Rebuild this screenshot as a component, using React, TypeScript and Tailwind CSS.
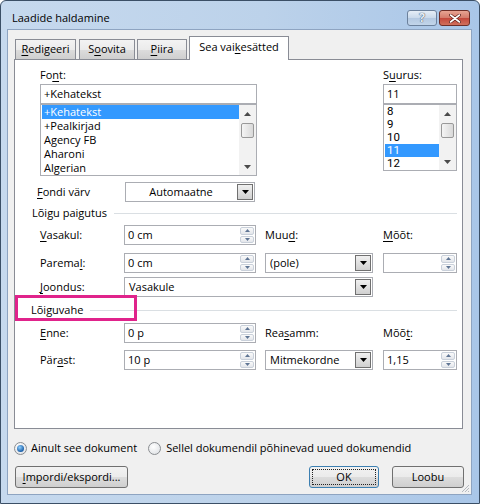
import React from "react";

function U({ children }: { children: React.ReactNode }) {
  return <span className="underline decoration-[1px] underline-offset-[2px]">{children}</span>;
}

function Up({ w = 7, h = 4, c = "#3f4a5a" }: { w?: number; h?: number; c?: string }) {
  return (
    <svg width={w} height={h} viewBox={`0 0 ${w} ${h}`}>
      <path d={`M0 ${h}L${w / 2} 0L${w} ${h}Z`} fill={c} />
    </svg>
  );
}

function Down({ w = 7, h = 4, c = "#3f4a5a" }: { w?: number; h?: number; c?: string }) {
  return (
    <svg width={w} height={h} viewBox={`0 0 ${w} ${h}`}>
      <path d={`M0 0L${w} 0L${w / 2} ${h}Z`} fill={c} />
    </svg>
  );
}

function SpinBox({ value, className }: { value: string; className: string }) {
  return (
    <div className={`flex h-[20px] border border-[#abadb3] bg-white ${className}`}>
      <div className="flex-1 pl-[3px] leading-[18px]">{value}</div>
      <div className="flex w-[16px] flex-col gap-px p-px">
        <div className="flex flex-1 items-center justify-center rounded-[2px] border border-[#c9d0da] bg-[linear-gradient(#fafafa,#e3e6eb)]">
          <Up w={5} h={3} c="#5f7594" />
        </div>
        <div className="flex flex-1 items-center justify-center rounded-[2px] border border-[#c9d0da] bg-[linear-gradient(#fafafa,#e3e6eb)]">
          <Down w={5} h={3} c="#5f7594" />
        </div>
      </div>
    </div>
  );
}

function DropDown({ value, className, center }: { value: string; className: string; center?: boolean }) {
  return (
    <div className={`flex h-[20px] border border-[#abadb3] bg-white ${className}`}>
      <div className={`flex-1 leading-[18px] ${center ? "text-center" : "pl-[4px]"}`}>{value}</div>
      <div className="m-px flex w-[16px] items-center justify-center border border-[#707070] bg-[linear-gradient(#f0f0f0,#d0d0d0)]">
        <Down c="#000" />
      </div>
    </div>
  );
}

function ScrollBar() {
  return (
    <div className="flex w-[17px] flex-col bg-[#f2f2f2]">
      <div className="flex h-[17px] items-center justify-center">
        <Up c="#4a4a4a" />
      </div>
      <div className="flex-1 px-[2px] pt-px">
        <div className="h-[15px] rounded-[2px] border border-[#999] bg-[linear-gradient(to_right,#f5f5f5,#d9d9d9)]" />
      </div>
      <div className="flex h-[17px] items-center justify-center">
        <Down c="#4a4a4a" />
      </div>
    </div>
  );
}

function ListBox({
  items,
  selected,
  row,
  className,
}: {
  items: string[];
  selected: number;
  row: string;
  className: string;
}) {
  return (
    <div className={`flex border border-[#abadb3] bg-white ${className}`}>
      <div className="flex-1 pl-px">
        {items.map((t, i) => (
          <div
            key={t}
            className={`${row} pl-[2px] ${i === selected ? "bg-[#3399ff] text-white" : ""}`}
          >
            {t}
          </div>
        ))}
      </div>
      <ScrollBar />
    </div>
  );
}

function Section({ title, className }: { title: string; className: string }) {
  return (
    <div className={`flex h-[14px] items-center gap-[7px] pr-[5px] ${className}`}>
      <span>{title}</span>
      <div className="h-px flex-1 bg-[#dadfe3]" />
    </div>
  );
}

function Radio({ on }: { on?: boolean }) {
  return (
    <div className="flex h-[13px] w-[13px] items-center justify-center rounded-full border border-[#8a8d91] bg-[radial-gradient(circle_at_40%_35%,#ffffff,#dadde1)]">
      {on && (
        <div className="h-[7px] w-[7px] rounded-full bg-[radial-gradient(circle_at_40%_35%,#8fd0ff,#1b5fa8_70%)]" />
      )}
    </div>
  );
}

function Button({ children, className, primary }: { children: React.ReactNode; className: string; primary?: boolean }) {
  return (
    <div
      className={`flex h-[22px] items-center justify-center rounded-[3px] border bg-[linear-gradient(#f2f2f2,#ebebeb_50%,#dddddd_50%,#cfcfcf)] ${
        primary ? "border-[#3c7fb1] p-[2px]" : "border-[#707070]"
      } ${className}`}
    >
      {primary ? (
        <div className="flex h-full w-full items-center justify-center border border-dotted border-[#222]">{children}</div>
      ) : (
        children
      )}
    </div>
  );
}

function Tab({ children, className, active }: { children: React.ReactNode; className: string; active?: boolean }) {
  return (
    <div
      className={`flex items-center justify-center border border-b-0 border-[#898c95] ${
        active
          ? "relative z-10 -mb-px h-[24px] bg-white pb-[3px]"
          : "h-[20px] bg-[linear-gradient(#f3f3f3,#ebebeb_50%,#dddddd_50%,#cfcfcf)]"
      } ${className}`}
    >
      {children}
    </div>
  );
}

export default function App() {
  return (
    <div className="h-[504px] w-[480px] overflow-hidden bg-white">
      <div className="flex h-[504px] w-[480px] flex-col rounded-t-[6px] border border-[#3b4f66] bg-[linear-gradient(to_right,#c6d9ee,#bcd2ea_55%,#a9c6e8)] font-['Open_Sans',sans-serif] text-[11px] text-black">
        {/* caption */}
        <div className="flex h-[28px] items-center pt-[6px] pl-[11px] pr-[9px]">
          <span className="flex-1 text-[11px]">Laadide haldamine</span>
          <div className="flex h-[16px] w-[30px] items-center justify-center rounded-[3px] border border-[#6c819c] bg-[linear-gradient(#e6eef7,#c9d9eb_50%,#b3c8e1_50%,#c2d5ea)] text-[12px] font-bold leading-none text-[#e9f0f7] [text-shadow:0_0_1px_#3b4e66,0_0_1px_#3b4e66]">
            ?
          </div>
          <div className="ml-[2px] flex h-[16px] w-[31px] items-center justify-center rounded-[3px] border border-[#6e2e28] bg-[linear-gradient(#e8a493,#d47a6a_50%,#c4463a_50%,#d0705c)]">
            <svg width="12" height="9" viewBox="0 0 12 9">
              <path d="M1.5 1L10.5 8M10.5 1L1.5 8" stroke="#5b1d16" strokeWidth="3" strokeLinecap="round" />
              <path d="M1.5 1L10.5 8M10.5 1L1.5 8" stroke="#ffffff" strokeWidth="1.6" strokeLinecap="round" />
            </svg>
          </div>
        </div>

        {/* client area */}
        <div className="relative ml-[6px] flex h-[466px] w-[465px] flex-col border border-[#8ea4c1] bg-[#f0f0f0]">
          {/* tabs */}
          <div className="mt-[6px] flex h-[23px] items-end pl-[7px]">
            <Tab className="w-[61px]">
              <span>
                <U>R</U>edigeeri
              </span>
            </Tab>
            <Tab className="ml-[3px] w-[56px]">
              <span>
                S<U>o</U>ovita
              </span>
            </Tab>
            <Tab className="ml-[2px] w-[50px]">
              <span>
                <U>P</U>iira
              </span>
            </Tab>
            <Tab active className="ml-[2px] w-[100px]">
              <span>
                Sea vai<U>k</U>esätted
              </span>
            </Tab>
          </div>

          {/* tab page */}
          <div className="relative ml-[6px] h-[370px] w-[449px] border border-[#898c95] bg-white">
            <div className="flex pl-[25px] pt-[7px]">
              <div className="w-[217px]">
                <div className="flex h-[17px] items-center">
                  <span>
                    Fo<U>n</U>t:
                  </span>
                </div>
                <div className="h-[20px] border border-[#abadb3] pl-[3px] leading-[18px]">+Kehatekst</div>
                <ListBox
                  className="h-[72px]"
                  row="h-[14px] leading-[14px]"
                  selected={0}
                  items={["+Kehatekst", "+Pealkirjad", "Agency FB", "Aharoni", "Algerian"]}
                />
              </div>
              <div className="ml-[126px] w-[74px]">
                <div className="flex h-[17px] items-center">
                  <span>
                    S<U>u</U>urus:
                  </span>
                </div>
                <div className="h-[20px] border border-[#abadb3] pl-[3px] leading-[18px]">11</div>
                <ListBox
                  className="h-[67px]"
                  row="h-[13px] overflow-hidden font-['Roboto',sans-serif] text-[11.5px] leading-[13px]"
                  selected={3}
                  items={["8", "9", "10", "11", "12"]}
                />
              </div>
            </div>

            <div className="mt-[6px] flex items-center pl-[22px]">
              <span className="w-[88px]">
                <U>F</U>ondi värv
              </span>
              <DropDown center value="Automaatne" className="w-[130px]" />
            </div>

            <Section title="Lõigu paigutus" className="mt-[4px] pl-[17px]" />

            <div className="mt-[5px] flex h-[20px] items-center pl-[25px]">
              <span className="w-[84px]">
                <U>V</U>asakul:
              </span>
              <SpinBox value="0 cm" className="w-[132px]" />
              <span className="ml-[9px] w-[108px]">
                Muu<U>d</U>:
              </span>
              <span className="ml-[10px] w-[74px]">
                <U>M</U>õõt:
              </span>
            </div>
            <div className="mt-[8px] flex h-[20px] items-center pl-[25px]">
              <span className="w-[84px]">
                Parema<U>l</U>:
              </span>
              <SpinBox value="0 cm" className="w-[132px]" />
              <DropDown value="(pole)" className="ml-[9px] w-[108px]" />
              <SpinBox value="" className="ml-[10px] w-[74px]" />
            </div>
            <div className="mt-[4px] flex h-[20px] items-center pl-[25px]">
              <span className="w-[84px]">
                <U>J</U>oondus:
              </span>
              <DropDown value="Vasakule" className="w-[249px]" />
            </div>

            <Section title="Lõiguvahe" className="mt-[6px] pl-[16px]" />

            <div className="mt-[6px] flex h-[20px] items-center pl-[25px]">
              <span className="w-[84px]">
                <U>E</U>nne:
              </span>
              <SpinBox value="0 p" className="w-[132px]" />
              <span className="ml-[9px] w-[108px]">
                Rea<U>s</U>amm:
              </span>
              <span className="ml-[10px] w-[74px]">
                Mõõ<U>t</U>:
              </span>
            </div>
            <div className="mt-[7px] flex h-[20px] items-center pl-[25px]">
              <span className="w-[84px]">
                Pär<U>a</U>st:
              </span>
              <SpinBox value="10 p" className="w-[132px]" />
              <DropDown value="Mitmekordne" className="ml-[9px] w-[108px]" />
              <SpinBox value="1,15" className="ml-[10px] w-[74px]" />
            </div>

            {/* highlight around the spacing group */}
            <div className="absolute left-0 top-[235px] h-[26px] w-[122px] border-[3px] border-[#e0238b]" />
          </div>

          {/* scope */}
          <div className="mt-[11px] flex h-[16px] items-center pl-[6px]">
            <Radio on />
            <span className="ml-[4px]">Ainult see dokument</span>
            <div className="ml-[11px]">
              <Radio />
            </div>
            <span className="ml-[5px]">Sellel dokumendil põhinevad uued dokumendid</span>
          </div>

          {/* buttons */}
          <div className="mt-[10px] flex pl-[7px] pr-[7px]">
            <Button className="w-[113px]">
              <span>
                <U>I</U>mpordi/ekspordi...
              </span>
            </Button>
            <div className="flex-1" />
            <Button primary className="w-[70px]">
              OK
            </Button>
            <Button className="ml-[13px] w-[72px]">Loobu</Button>
          </div>

          {/* size grip */}
          <svg className="absolute bottom-[1px] right-[1px]" width="10" height="10" viewBox="0 0 10 10">
            <path d="M9 2L2 9M9 5L5 9M9 8L8 9" stroke="#b4b8be" strokeWidth="1" />
          </svg>
        </div>
      </div>
    </div>
  );
}
